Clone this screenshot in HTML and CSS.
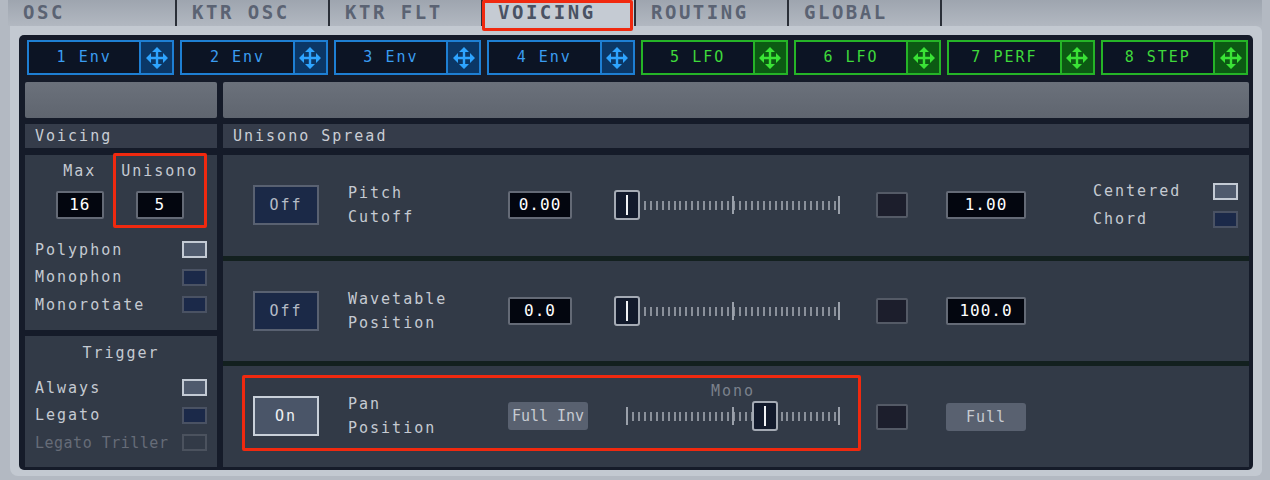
FILE: index.html
```html
<!DOCTYPE html>
<html>
<head>
  <link rel="stylesheet" href="styles.css">
</head>
<body>
  <div class="app">
    <div class="tabs">
      <div class="tab tab-first">OSC</div>
      <div class="tab">KTR OSC</div>
      <div class="tab">KTR FLT</div>
      <div class="tab active">VOICING</div>
      <div class="tab">ROUTING</div>
      <div class="tab">GLOBAL</div>
      <div class="tab tab-empty"></div>
    </div>

    <div class="frame">
      <div class="panel">
        <div class="slots">
          <div class="slot"><span class="slot-name">1 Env</span><span class="slot-move"><svg viewBox="0 0 26 26" width="26" height="26"><path class="move-line" d="M13 5v16M5 13h16"/><path class="move-head" d="M13 2l-5 5h10zM13 24l-5-5h10zM2 13l5-5v10zM24 13l-5-5v10z"/></svg></span></div>
          <div class="slot"><span class="slot-name">2 Env</span><span class="slot-move"><svg viewBox="0 0 26 26" width="26" height="26"><path class="move-line" d="M13 5v16M5 13h16"/><path class="move-head" d="M13 2l-5 5h10zM13 24l-5-5h10zM2 13l5-5v10zM24 13l-5-5v10z"/></svg></span></div>
          <div class="slot"><span class="slot-name">3 Env</span><span class="slot-move"><svg viewBox="0 0 26 26" width="26" height="26"><path class="move-line" d="M13 5v16M5 13h16"/><path class="move-head" d="M13 2l-5 5h10zM13 24l-5-5h10zM2 13l5-5v10zM24 13l-5-5v10z"/></svg></span></div>
          <div class="slot"><span class="slot-name">4 Env</span><span class="slot-move"><svg viewBox="0 0 26 26" width="26" height="26"><path class="move-line" d="M13 5v16M5 13h16"/><path class="move-head" d="M13 2l-5 5h10zM13 24l-5-5h10zM2 13l5-5v10zM24 13l-5-5v10z"/></svg></span></div>
          <div class="slot mod"><span class="slot-name">5 LFO</span><span class="slot-move"><svg viewBox="0 0 26 26" width="26" height="26"><path class="move-line" d="M13 5v16M5 13h16"/><path class="move-head" d="M13 2l-5 5h10zM13 24l-5-5h10zM2 13l5-5v10zM24 13l-5-5v10z"/></svg></span></div>
          <div class="slot mod"><span class="slot-name">6 LFO</span><span class="slot-move"><svg viewBox="0 0 26 26" width="26" height="26"><path class="move-line" d="M13 5v16M5 13h16"/><path class="move-head" d="M13 2l-5 5h10zM13 24l-5-5h10zM2 13l5-5v10zM24 13l-5-5v10z"/></svg></span></div>
          <div class="slot mod"><span class="slot-name">7 PERF</span><span class="slot-move"><svg viewBox="0 0 26 26" width="26" height="26"><path class="move-line" d="M13 5v16M5 13h16"/><path class="move-head" d="M13 2l-5 5h10zM13 24l-5-5h10zM2 13l5-5v10zM24 13l-5-5v10z"/></svg></span></div>
          <div class="slot mod"><span class="slot-name">8 STEP</span><span class="slot-move"><svg viewBox="0 0 26 26" width="26" height="26"><path class="move-line" d="M13 5v16M5 13h16"/><path class="move-head" d="M13 2l-5 5h10zM13 24l-5-5h10zM2 13l5-5v10zM24 13l-5-5v10z"/></svg></span></div>
        </div>

        <div class="main">
          <div class="side">
            <div class="bar"></div>
            <div class="section-title">Voicing</div>

            <div class="box voicing">
              <div class="voice-top">
                <div class="voice-col">
                  <span class="voice-label">Max</span>
                  <span class="value voice-value">16</span>
                </div>
                <div class="voice-col marked">
                  <span class="voice-label">Unisono</span>
                  <span class="value voice-value">5</span>
                </div>
              </div>
              <div class="options">
                <div class="option"><span>Polyphon</span><span class="check sel"></span></div>
                <div class="option"><span>Monophon</span><span class="check"></span></div>
                <div class="option"><span>Monorotate</span><span class="check"></span></div>
              </div>
            </div>

            <div class="box trigger">
              <div class="trigger-title">Trigger</div>
              <div class="options">
                <div class="option"><span>Always</span><span class="check sel"></span></div>
                <div class="option"><span>Legato</span><span class="check"></span></div>
                <div class="option disabled"><span>Legato Triller</span><span class="check off"></span></div>
              </div>
            </div>
          </div>

          <div class="content">
            <div class="bar"></div>
            <div class="section-title">Unisono Spread</div>

            <div class="rows">
              <div class="row">
                <div class="toggle">Off</div>
                <div class="param-name">Pitch<br>Cutoff</div>
                <div class="value">0.00</div>
                <div class="slider"><span class="handle at-min"></span></div>
                <div class="swatch"></div>
                <div class="value wide">1.00</div>
                <div class="modes">
                  <div class="option"><span>Centered</span><span class="check sel"></span></div>
                  <div class="option"><span>Chord</span><span class="check"></span></div>
                </div>
              </div>

              <div class="row">
                <div class="toggle">Off</div>
                <div class="param-name">Wavetable<br>Position</div>
                <div class="value">0.0</div>
                <div class="slider"><span class="handle at-min"></span></div>
                <div class="swatch"></div>
                <div class="value wide">100.0</div>
              </div>

              <div class="row pan">
                <div class="marked-row">
                  <div class="toggle on">On</div>
                  <div class="param-name">Pan<br>Position</div>
                  <div class="chip">Full Inv</div>
                  <div class="slider after-chip">
                    <span class="slider-label">Mono</span>
                    <span class="handle at-mono"></span>
                  </div>
                </div>
                <div class="swatch near"></div>
                <div class="chip wide">Full</div>
              </div>
            </div>
          </div>
        </div>
      </div>
    </div>
  </div>
</body>
</html>
```

FILE: styles.css
```css
body {
  margin: 0;
  background: #b3b9c2;
  font-family: "DejaVu Sans Mono", monospace;
}

.app {
  width: 1270px;
  height: 480px;
  display: flex;
  flex-direction: column;
  overflow: hidden;
}

/* top tab strip */
.tabs {
  height: 26px;
  display: flex;
  padding: 0 8px;
  flex: none;
}

.tab {
  position: relative;
  width: 153px;
  box-sizing: border-box;
  padding-left: 15px;
  border-right: 2px solid #2a2f38;
  background: linear-gradient(#9ea5af, #b2b8c1);
  color: #5b6373;
  font-weight: bold;
  font-size: 19px;
  letter-spacing: 2.5px;
  line-height: 25px;
  white-space: nowrap;
}

.tab-first {
  width: 169px;
}

.tab-empty {
  flex: 1;
  border-right: none;
}

.tab.active {
  background: #c5cbd3;
  color: #4a5263;
}

.tab.active::after {
  content: "";
  position: absolute;
  left: -1px;
  right: 1px;
  top: 0;
  bottom: -5px;
  border: 3px solid #f0290f;
  border-radius: 2px;
}

/* light frame + dark panel */
.frame {
  flex: 1;
  margin: 0 8px 4px 10px;
  padding: 9px 9px 6px 9px;
  background: #c3c9d1;
  border-radius: 0 6px 6px 8px;
  box-sizing: border-box;
  min-height: 0;
}

.panel {
  height: 100%;
  box-sizing: border-box;
  padding: 5px 4px 3px 6px;
  background: #151b29;
  border-radius: 5px;
  display: flex;
  flex-direction: column;
}

/* modulator slots */
.slots {
  display: flex;
  gap: 6px;
  height: 35px;
  margin: 0 1px 0 2px;
  flex: none;
}

.slot {
  flex: 1;
  display: flex;
  border: 2px solid #1e7fd3;
  color: #3a9cf0;
}

.slot-name {
  flex: 1;
  background: #0c1424;
  text-align: center;
  font-size: 15px;
  letter-spacing: 2px;
  line-height: 31px;
}

.slot-move {
  width: 31px;
  border-left: 2px solid #1e7fd3;
  background: #0b3766;
  color: #2ea4ff;
  display: flex;
  align-items: center;
  justify-content: center;
}

.move-line {
  stroke: currentColor;
  stroke-width: 2.4;
  fill: none;
}

.move-head {
  fill: currentColor;
}

.slot.mod {
  border-color: #25b427;
  color: #3fd93b;
}

.slot.mod .slot-move {
  border-left-color: #25b427;
  background: #0c5a13;
  color: #3ae236;
}

/* two columns */
.main {
  flex: 1;
  display: flex;
  gap: 6px;
  margin-top: 7px;
  min-height: 0;
}

.side {
  width: 192px;
  display: flex;
  flex-direction: column;
}

.content {
  flex: 1;
  display: flex;
  flex-direction: column;
}

.bar {
  height: 36px;
  flex: none;
  background: linear-gradient(#6b717b, #5f656f);
  border-radius: 2px;
}

.section-title {
  height: 24px;
  flex: none;
  margin-top: 6px;
  padding-left: 10px;
  background: #353c4a;
  color: #c9cdd4;
  font-size: 15px;
  letter-spacing: 2px;
  line-height: 24px;
}

.box {
  background: #323a47;
  color: #c5cad2;
  font-size: 15px;
  letter-spacing: 2px;
  padding: 0 10px;
}

.voicing {
  height: 175px;
  margin-top: 7px;
  box-sizing: border-box;
}

.trigger {
  flex: 1;
  margin-top: 6px;
  padding-top: 8px;
}

.voice-top {
  display: flex;
  gap: 3px;
  margin: -2px 0 0 15px;
}

.voice-col {
  width: 60px;
  display: flex;
  flex-direction: column;
  align-items: center;
  padding-top: 9px;
}

.voice-col.marked {
  width: 95px;
  box-sizing: border-box;
  padding: 6px 0 6px;
  border: 3px solid #f0290f;
  border-radius: 2px;
}

.voice-label {
  line-height: 18px;
  white-space: nowrap;
}

.value.voice-value {
  width: 48px;
  margin-top: 11px;
  letter-spacing: 1px;
}

.options {
  margin-top: 8px;
}

.trigger .options {
  margin-top: 12px;
}

.option {
  height: 27.5px;
  display: flex;
  align-items: center;
  justify-content: space-between;
  white-space: nowrap;
}

.option.disabled {
  color: #666c78;
  letter-spacing: 0.5px;
}

.trigger-title {
  text-align: center;
  line-height: 18px;
}

.check {
  width: 25px;
  height: 17px;
  box-sizing: border-box;
  border: 2px solid #4a5263;
  background: #1b2949;
  flex: none;
}

.check.sel {
  border-color: #c3cad4;
  background: #4f5a6d;
}

.check.off {
  border-color: #4b525e;
  background: transparent;
}

/* spread rows */
.rows {
  flex: 1;
  margin-top: 7px;
  display: flex;
  flex-direction: column;
  gap: 5px;
  background: #13201f;
}

.row {
  flex: 1;
  display: flex;
  align-items: center;
  padding-left: 30px;
  background: #323a47;
  color: #c5cad2;
  font-size: 15px;
  letter-spacing: 2px;
}

.row.pan {
  padding-left: 19px;
}

.marked-row {
  align-self: flex-start;
  margin-top: 9px;
  height: 76px;
  box-sizing: border-box;
  display: flex;
  align-items: center;
  padding: 6px 18px 0 8px;
  border: 3px solid #f0290f;
  border-radius: 2px;
}

.toggle {
  width: 66px;
  height: 40px;
  box-sizing: border-box;
  border: 2px solid #596171;
  background: #1b2947;
  color: #b6bcc6;
  display: flex;
  align-items: center;
  justify-content: center;
  flex: none;
}

.toggle.on {
  border-color: #c9d0d9;
  background: #4a5568;
  color: #eef0f3;
}

.param-name {
  width: 160px;
  margin-left: 29px;
  line-height: 24px;
  flex: none;
}

.value {
  width: 64px;
  height: 28px;
  box-sizing: border-box;
  border: 2px solid #646a76;
  border-radius: 2px;
  background: #03060f;
  color: #ffffff;
  font-size: 16px;
  letter-spacing: 1px;
  line-height: 24px;
  text-align: center;
  flex: none;
}

.value.wide {
  width: 80px;
  margin-left: 38px;
}

.slider {
  position: relative;
  width: 214px;
  height: 30px;
  margin-left: 54px;
  flex: none;
  background:
    linear-gradient(#9aa0aa, #9aa0aa) 0 6px / 2px 18px no-repeat,
    linear-gradient(#9aa0aa, #9aa0aa) 106px 6px / 2px 18px no-repeat,
    linear-gradient(#9aa0aa, #9aa0aa) 212px 6px / 2px 18px no-repeat,
    repeating-linear-gradient(90deg, #8a909a 0 2px, transparent 2px 5.944px) 0 11px / 214px 9px no-repeat;
}

.slider.after-chip {
  margin-left: 38px;
}

.slider-label {
  position: absolute;
  left: 0;
  right: 0;
  top: -18px;
  text-align: center;
  color: #7b818c;
  line-height: 16px;
}

.handle {
  position: absolute;
  top: 0;
  width: 26px;
  height: 30px;
  box-sizing: border-box;
  border: 2px solid #a4aab4;
  border-radius: 3px;
  background: #121a2c;
}

.handle::after {
  content: "";
  position: absolute;
  left: 10px;
  top: 3px;
  width: 2px;
  height: 20px;
  background: #f0f2f5;
}

.handle.at-min {
  left: -12px;
}

.handle.at-mono {
  left: 126px;
}

.swatch {
  width: 32px;
  height: 26px;
  box-sizing: border-box;
  margin-left: 36px;
  border: 2px solid #545a66;
  border-radius: 2px;
  background: #1c1e2c;
  flex: none;
}

.swatch.near {
  margin-left: 15px;
}

.chip {
  width: 80px;
  height: 28px;
  border-radius: 3px;
  background: #596170;
  color: #c6cad1;
  text-align: center;
  line-height: 28px;
  letter-spacing: 0;
  white-space: nowrap;
  flex: none;
}

.chip.wide {
  margin-left: 38px;
  letter-spacing: 1px;
}

.modes {
  width: 145px;
  margin-left: 67px;
}

.modes .option {
  height: 28px;
}
```
